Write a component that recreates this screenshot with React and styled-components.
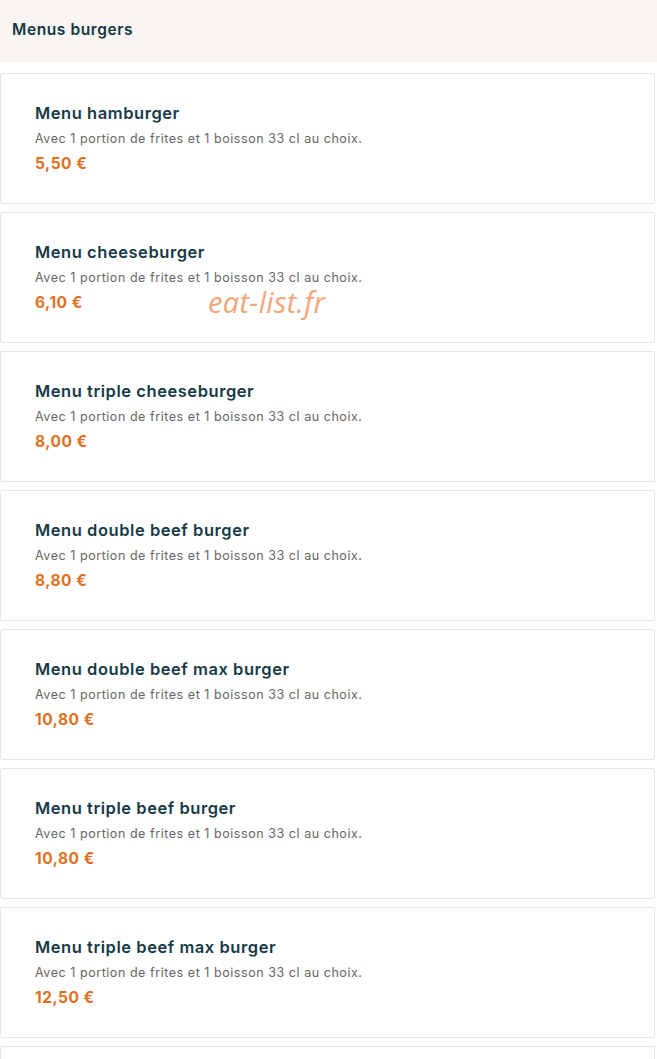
import React from 'react'
import styled, {createGlobalStyle} from 'styled-components'

const GlobalStyle = createGlobalStyle`
  html, body {
    margin: 0;
    padding: 0;
    background: #fff;
    font-family: Inter, "Open Sans", sans-serif;
  }
`

const Page = styled.main`
  position: relative;
  width: 657px;
  height: 1059px;
  overflow: hidden;
`

const Header = styled.header`
  height: 62px;
  display: flex;
  align-items: center;
  padding: 0 12px 4px;
  box-sizing: border-box;
  background: #f8f5f2;
  margin-bottom: 11px;
  & h2 {
    margin: 0;
    font-size: 15.5px;
    font-weight: 600;
    letter-spacing: 0.6px;
    color: #153846;
  }
`

const List = styled.div`
  display: flex;
  flex-direction: column;
  gap: 8px;
  padding-right: 2px;
`

const Card = styled.article`
  border: 1px solid #e6e6e6;
  border-radius: 2px;
  padding: 27px 34px;
  box-sizing: border-box;
  height: 131px;
`

const Title = styled.h3`
  margin: 0;
  font-size: 16.5px;
  line-height: 24px;
  font-weight: 600;
  color: #163a47;
  letter-spacing: 0.55px;
`

const Desc = styled.p`
  margin: 4px 0 0;
  font-size: 12.5px;
  line-height: 20px;
  color: #666;
  letter-spacing: 0.55px;
`

const Price = styled.div`
  margin-top: 4px;
  font-size: 15.5px;
  line-height: 22px;
  font-weight: 700;
  color: #e0701f;
  letter-spacing: 0.5px;
`

const Watermark = styled.span`
  position: absolute;
  left: 208px;
  top: 282px;
  font-family: "Open Sans", sans-serif;
  font-style: italic;
  font-size: 29px;
  letter-spacing: 0.3px;
  color: #f2a679;
  pointer-events: none;
`

const desc = 'Avec 1 portion de frites et 1 boisson 33 cl au choix.'

const menus = [
  {name: 'Menu hamburger', price: '5,50 €'},
  {name: 'Menu cheeseburger', price: '6,10 €'},
  {name: 'Menu triple cheeseburger', price: '8,00 €'},
  {name: 'Menu double beef burger', price: '8,80 €'},
  {name: 'Menu double beef max burger', price: '10,80 €'},
  {name: 'Menu triple beef burger', price: '10,80 €'},
  {name: 'Menu triple beef max burger', price: '12,50 €'},
]

const App = () => {
  return (
    <Page>
      <GlobalStyle />
      <Header><h2>Menus burgers</h2></Header>
      <List>
        {menus.map(m => (
          <Card key={m.name}>
            <Title>{m.name}</Title>
            <Desc>{desc}</Desc>
            <Price>{m.price}</Price>
          </Card>
        ))}
        <Card />
      </List>
      <Watermark>eat-list.fr</Watermark>
    </Page>
  )
}

export default App
